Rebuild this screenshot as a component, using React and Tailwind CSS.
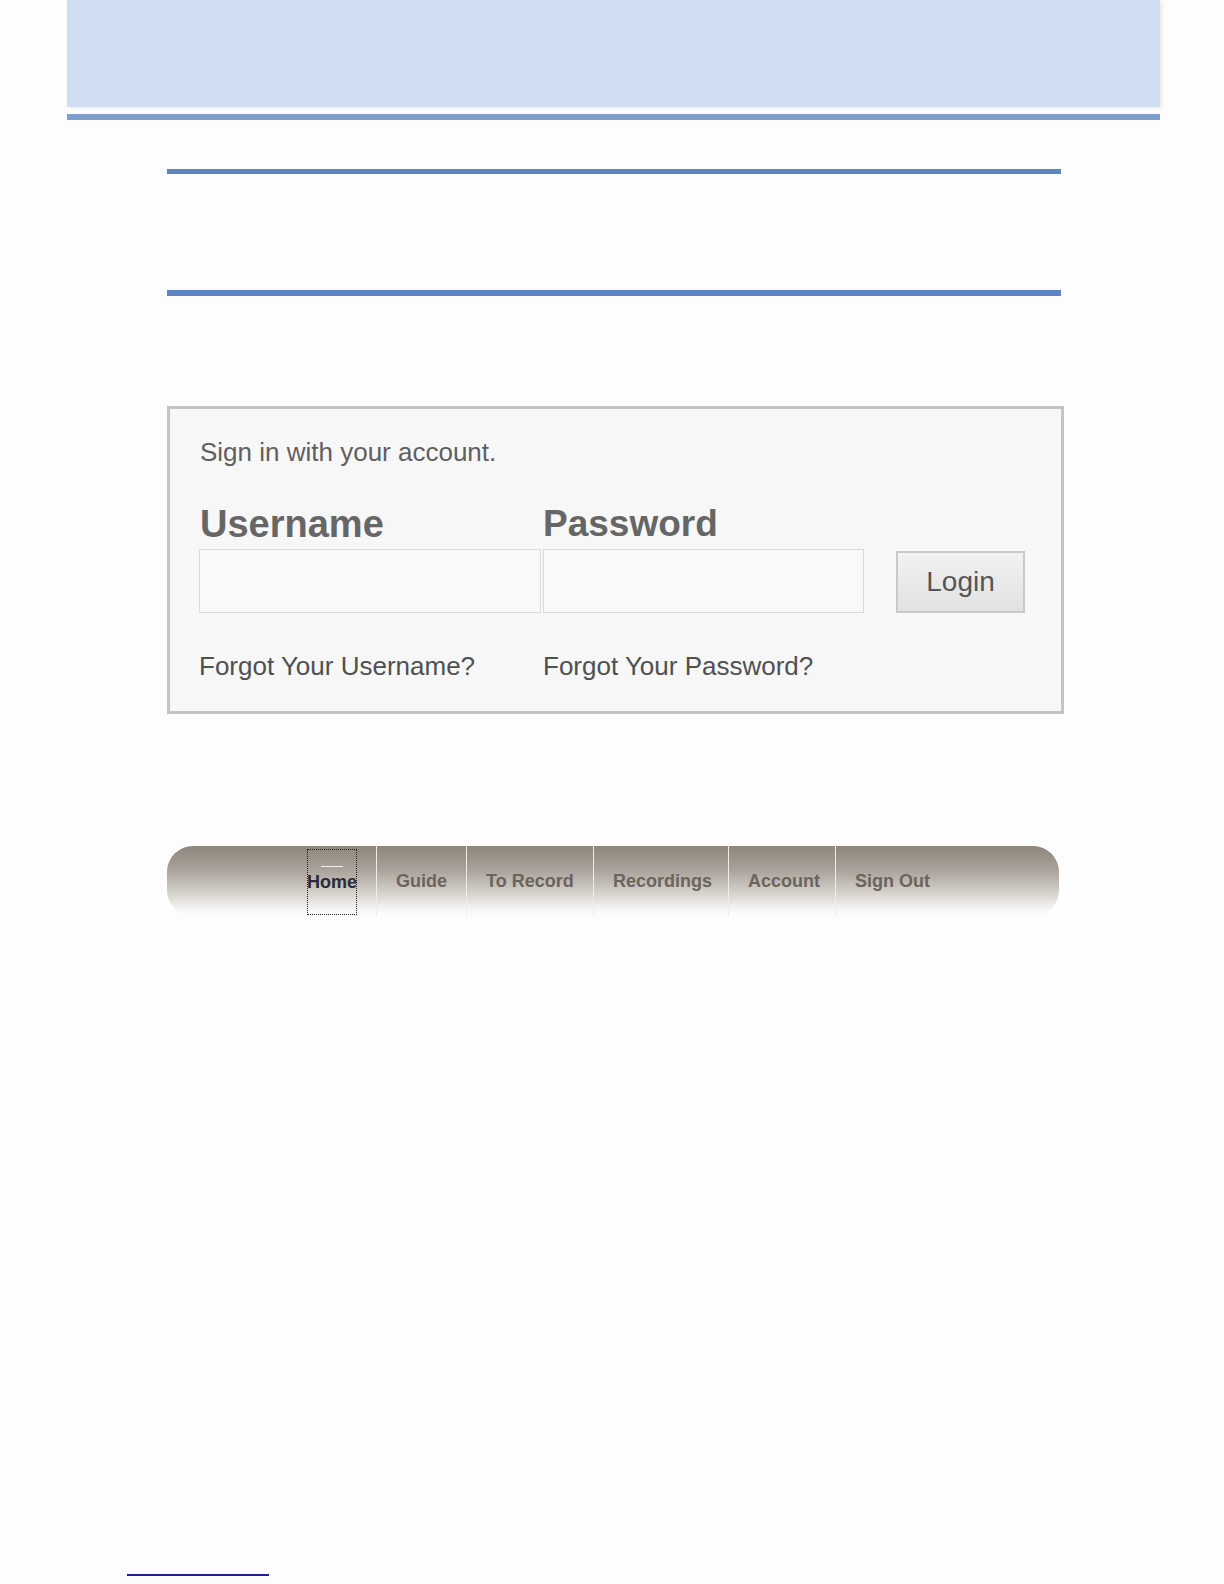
import React from "react";

const navItems = [
  { label: "Guide", w: "w-[90px]" },
  { label: "To Record", w: "w-[127px]" },
  { label: "Recordings", w: "w-[135px]" },
  { label: "Account", w: "w-[107px]" },
  { label: "Sign Out", w: "w-[110px]" },
];

export default function App() {
  return (
    <div className="w-[1224px] min-h-[1584px] bg-[#fdfdfd] flex flex-col" style={{ fontFamily: '"Liberation Sans", Arial, sans-serif' }}>
      {/* Header */}
      <div className="ml-[67px] w-[1093px] h-[107px] bg-[#cfdcf1] shadow-[2px_1px_4px_rgba(0,0,0,0.08)]" />
      <div className="ml-[67px] mt-[7px] w-[1093px] h-[6px] bg-[#7d9fcf]" />

      {/* Title rules */}
      <div className="ml-[167px] mt-[49px] w-[894px] h-[5px] bg-[#5a87c0]" />
      <div className="ml-[167px] mt-[116px] w-[894px] h-[6px] bg-[#5a87c0]" />

      {/* Login box */}
      <div className="ml-[167px] mt-[110px] w-[897px] h-[308px] border-[3px] border-[#c4c4c4] bg-[#f7f7f7] pl-[29px] pt-[28px] flex flex-col">
        <p className="text-[26px] leading-[30px] text-[#5f5f5f] pl-[1px]">Sign in with your account.</p>
        <div className="flex mt-[36px] items-end">
          <div className="w-[342px] flex flex-col">
            <span className="text-[38px] leading-[42px] font-bold text-[#666] pl-[1px]">Username</span>
            <div className="mt-[4px] h-[64px] border border-[#dadada] bg-[#f9f9f9]" />
          </div>
          <div className="ml-[2px] w-[321px] flex flex-col">
            <span className="text-[37px] leading-[42px] font-bold text-[#666]">Password</span>
            <div className="mt-[4px] h-[64px] border border-[#dadada] bg-[#f9f9f9]" />
          </div>
          <button className="ml-[32px] w-[129px] h-[62px] border-2 border-[#c9c9c9] bg-[linear-gradient(to_bottom,#f2f2f2,#e9e9e9_50%,#e2e2e2)] text-[28px] leading-none text-[#555] flex items-center justify-center">
            Login
          </button>
        </div>
        <div className="flex mt-[38px] text-[26px] leading-[30px] text-[#505050]">
          <span className="w-[344px]">Forgot Your Username?</span>
          <span>Forgot Your Password?</span>
        </div>
      </div>

      {/* Nav bar */}
      <div className="ml-[167px] mt-[132px] w-[892px] h-[70px] rounded-[26px] bg-[linear-gradient(to_bottom,#8e867c_0%,#aaa39b_35%,#d2cec8_65%,#f3f2f0_88%,#fdfdfd_100%)] flex items-stretch pl-[140px]">
        <div className="flex w-[69px]">
          <span className="relative mt-[3px] mb-[1px] w-[50px] border border-dotted border-[#222] flex items-center justify-center text-[18px] font-bold text-[#2a2a3c] whitespace-nowrap">
            <span className="absolute top-[16px] left-[13px] w-[22px] h-[1px] bg-[#eeeeee]" />
            Home
          </span>
        </div>
        {navItems.map((item) => (
          <div key={item.label} className={`${item.w} border-l border-[#efece8] pl-[19px] flex items-center text-[18px] font-bold text-[#6b645c] whitespace-nowrap`}>
            {item.label}
          </div>
        ))}
      </div>

      {/* Footnote rule */}
      <div className="ml-[127px] mt-[658px] w-[142px] h-[2px] bg-[#1e1e9c]" />
    </div>
  );
}
